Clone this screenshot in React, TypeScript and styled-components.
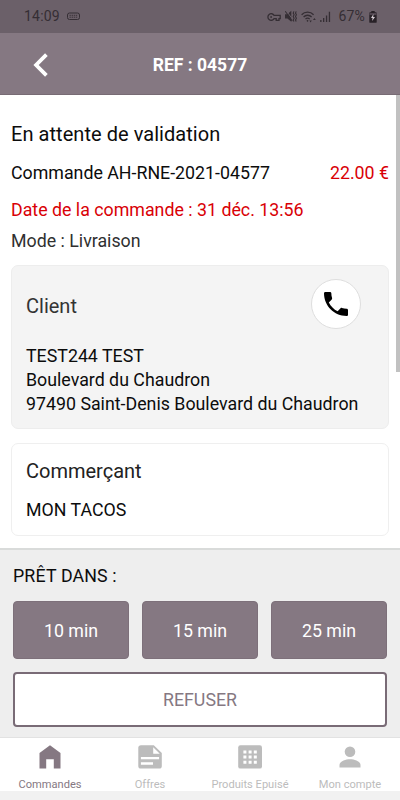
import React from 'react';
import styled, { createGlobalStyle } from 'styled-components';

const mauve = '#857882';

const GlobalStyle = createGlobalStyle`
  * { box-sizing: border-box; }
  body { margin: 0; background: #fff; font-family: Roboto, sans-serif; overflow: hidden; }
  button { font-family: inherit; padding: 0; cursor: pointer; }
  svg { display: block; flex: none; }
`;

const Screen = styled.div`
  width: 400px;
  height: 800px;
  display: flex;
  flex-direction: column;
  background: #f1f1f1;
  color: #0c0c0c;
`;

const StatusBar = styled.div`
  height: 33px;
  flex: none;
  display: flex;
  align-items: center;
  justify-content: space-between;
  padding: 0 23px 0 24px;
  background: #6b6069;
  color: #352e34;
`;

const StatusGroup = styled.div<{ $gap: number }>`
  display: flex;
  align-items: center;
  gap: ${(p) => p.$gap}px;
`;

const StatusText = styled.span<{ $inset?: number }>`
  margin-left: ${(p) => p.$inset ?? 0}px;
  font-size: 14px;
  line-height: 33px;
  letter-spacing: 0.2px;
`;

const Header = styled.header`
  height: 62px;
  flex: none;
  display: grid;
  grid-template-columns: 60px 1fr 60px;
  align-items: center;
  background: ${mauve};
  border-bottom: 1px solid #776b74;
`;

const BackButton = styled.button`
  display: flex;
  border: 0;
  background: none;
  padding: 2px 0 0 33px;
`;

const HeaderTitle = styled.h1`
  margin: 2px 0 0;
  text-align: center;
  color: #fff;
  font-size: 17.5px;
  font-weight: 700;
  line-height: 24px;
`;

const Body = styled.main`
  height: 453px;
  flex: none;
  display: flex;
  background: #fff;
`;

const Scroll = styled.div`
  width: 389px;
  padding: 25px 0 0 11px;
`;

const ScrollTrack = styled.div`
  width: 11px;
  padding-left: 7px;
`;

const ScrollThumb = styled.div`
  width: 4px;
  height: 277px;
  background: #c1c1c1;
`;

const Line = styled.div<{ $size: number; $height: number; $color?: string; $spacing?: number }>`
  display: flex;
  justify-content: space-between;
  white-space: nowrap;
  font-size: ${(p) => p.$size}px;
  line-height: ${(p) => p.$height}px;
  color: ${(p) => p.$color ?? 'inherit'};
  letter-spacing: ${(p) => p.$spacing ?? 0}px;
`;

const Price = styled.span`
  color: #d90006;
`;

const Card = styled.section<{ $filled?: boolean }>`
  width: 378px;
  height: ${(p) => (p.$filled ? 164 : 93)}px;
  margin-top: ${(p) => (p.$filled ? 7 : 14)}px;
  padding: ${(p) => (p.$filled ? 14 : 11)}px 14px 0;
  background: ${(p) => (p.$filled ? '#f4f4f4' : '#fff')};
  border: 1px solid ${(p) => (p.$filled ? '#ededed' : '#efefef')};
  border-radius: 7px;
`;

const CardHead = styled.div`
  height: 52px;
  margin-bottom: 12px;
  display: flex;
  align-items: center;
  justify-content: space-between;
  padding-right: 13px;
`;

const CallButton = styled.button`
  width: 50px;
  height: 50px;
  margin-bottom: 4px;
  display: flex;
  align-items: center;
  justify-content: center;
  border: 1px solid #dedede;
  border-radius: 50%;
  background: #fff;
`;

const Actions = styled.section`
  height: 189px;
  flex: none;
  padding: 14px 13px 0;
  background: #eeeeee;
  border-top: 2px solid #d9dbda;
`;

const Delays = styled.div`
  display: grid;
  grid-template-columns: repeat(3, 116px);
  column-gap: 13px;
  margin: 13px 0 13px;
`;

const DelayButton = styled.button`
  height: 58px;
  border: 1px solid #7d707a;
  border-radius: 4px;
  background: ${mauve};
  color: #fff;
  font-size: 17.8px;
`;

const RefuseButton = styled.button`
  width: 374px;
  height: 55px;
  border: 2px solid #796b76;
  border-radius: 4px;
  background: #fff;
  color: ${mauve};
  font-size: 17.8px;
`;

const Nav = styled.nav`
  height: 54px;
  flex: none;
  display: grid;
  grid-template-columns: repeat(4, 1fr);
  background: #fff;
  border-top: 1px solid #e2e2e2;
`;

const NavItem = styled.a<{ $active?: boolean }>`
  display: flex;
  flex-direction: column;
  align-items: center;
  padding-top: 6px;
  color: ${(p) => (p.$active ? mauve : '#bcbcbc')};
  font-size: 11.1px;
  line-height: 14px;
  white-space: nowrap;

  svg { margin-bottom: 8px; }
`;

const KeyboardIcon = () => (
  <svg width="13" height="9" viewBox="0 0 13 9" fill="none" stroke="currentColor">
    <rect x=".5" y="1" width="12" height="6.5" rx="2" />
    <path d="M2.5 3.3h8M2.5 5.2h8" strokeDasharray="1.4 .7" strokeWidth=".9" />
  </svg>
);

const KeyIcon = () => (
  <svg width="14" height="10" viewBox="0 0 14 10" fill="none" stroke="currentColor" strokeWidth="1.3">
    <path d="M7.1 3.4A3.3 3.3 0 1 0 7.1 6.6H9.2V8.3H12V6.6H13.2V3.4Z" />
    <circle cx="4.1" cy="5" r=".9" fill="currentColor" stroke="none" />
  </svg>
);

const MutedIcon = () => (
  <svg width="12" height="13" viewBox="0 0 12 13">
    <path d="M0 4.2h2.4L6.3.8v11L2.4 8.6H0z" fill="currentColor" />
    <path d="M1.2.6l6.4 8.8" stroke="#6b6069" strokeWidth="1" />
    <path d="M.2 1.2l7 9.8" stroke="currentColor" strokeWidth="1.1" />
    <path d="M8.9 1.4l-.7 1.7.9 1.7-.9 1.7.9 1.7-.9 1.7.7 1.6M11.2 1.4l-.7 1.7.9 1.7-.9 1.7.9 1.7-.9 1.7.7 1.6" fill="none" stroke="currentColor" strokeWidth="1.1" />
  </svg>
);

const WifiIcon = () => (
  <svg width="15" height="12" viewBox="0 0 15 12" fill="none" stroke="currentColor" strokeWidth="1.3">
    <path d="M.6 3.8a8.2 8.2 0 0 1 12 0M2.6 6a5.5 5.5 0 0 1 8 0M4.5 8.1a2.9 2.9 0 0 1 4.2 0" />
    <path d="M6.5 8.8l1 1-1 1.1-1-1.1z" fill="currentColor" stroke="none" />
    <path d="M8.4 9.5h2.4l-1.2 2zM12 9h2.8l-1.4-2z" fill="currentColor" stroke="none" />
  </svg>
);

const SignalIcon = () => (
  <svg width="11" height="11" viewBox="0 0 11 11" fill="currentColor">
    <path d="M.2 9h1.3v2H.2zM3 7h1.3v4H3zM5.9 4.4h1.3V11H5.9zM8.8.8h1.3V11H8.8z" />
  </svg>
);

const BatteryIcon = () => (
  <svg width="8" height="12" viewBox="0 0 8 12">
    <path d="M2.3 0h3.4v1.3h1.2c.5 0 .8.3.8.8v8.8c0 .6-.3.9-.8.9H1.1c-.5 0-.8-.3-.8-.9V2.1c0-.5.3-.8.8-.8h1.2z" fill="#282127" />
    <path d="M.4 2h7.2v2H.4z" fill="#514650" />
    <path d="M4.5 3L2 6.9h1.6l-.5 3L6 6H4.2z" fill="#d5ccd3" />
  </svg>
);

const BackIcon = () => (
  <svg width="16" height="24" viewBox="0 0 16 24" fill="none" stroke="#fff" strokeWidth="3.8">
    <path d="M13.4 1.7L3.1 12l10.3 10.3" />
  </svg>
);

const PhoneIcon = () => (
  <svg width="32" height="32" viewBox="0 0 24 24" fill="#000">
    <path d="M6.62 10.79c1.44 2.83 3.76 5.14 6.59 6.59l2.2-2.2c.27-.27.67-.36 1.02-.24 1.12.37 2.33.57 3.57.57.55 0 1 .45 1 1V20c0 .55-.45 1-1 1-9.39 0-17-7.61-17-17 0-.55.45-1 1-1h3.5c.55 0 1 .45 1 1 0 1.25.2 2.45.57 3.57.11.35.03.74-.25 1.02z" />
  </svg>
);

const HomeIcon = () => (
  <svg width="26" height="26" viewBox="0 0 26 26" fill="currentColor">
    <path d="M13 1.2L23.5 9v15.6h-6.7v-9.3H9.2v9.3H2.5V9z" />
  </svg>
);

const OffersIcon = () => (
  <svg width="26" height="26" viewBox="0 0 26 26">
    <path d="M4 1.2h12.8l8 7.9v13.1c0 1.4-1 2.4-2.4 2.4H3.7c-1.4 0-2.4-1-2.4-2.4V3.6c0-1.4 1-2.4 2.7-2.4z" fill="currentColor" />
    <path d="M16.2 3.2v6.6h6.6zM3.9 13.1h18.2v2.2H3.9zM3.9 18.3H16v2.4H3.9z" fill="#fff" />
  </svg>
);

const GridIcon = () => (
  <svg width="26" height="26" viewBox="0 0 26 26">
    <rect x="1.2" y="1.2" width="23.8" height="23.4" rx="2.2" fill="currentColor" />
    <path d="M6.4 6.4h3v3h-3zM11.6 6.4h3v3h-3zM16.8 6.4h3v3h-3zM6.4 11.6h3v3h-3zM11.6 11.6h3v3h-3zM16.8 11.6h3v3h-3zM6.4 16.8h3v3h-3zM11.6 16.8h3v3h-3zM16.8 16.8h3v3h-3z" fill="#fff" />
  </svg>
);

const AccountIcon = () => (
  <svg width="26" height="26" viewBox="0 0 26 26" fill="currentColor">
    <circle cx="13" cy="7.7" r="5.3" />
    <path d="M2.5 23.5v-2.4c0-3.9 5.7-5.9 10.5-5.9s10.5 2 10.5 5.9v2.4z" />
  </svg>
);

const delays = [10, 15, 25];

const tabs = [
  { label: 'Commandes', icon: <HomeIcon />, active: true },
  { label: 'Offres', icon: <OffersIcon /> },
  { label: 'Produits Epuisé', icon: <GridIcon /> },
  { label: 'Mon compte', icon: <AccountIcon /> },
];

export default function App() {
  return (
    <>
      <GlobalStyle />
      <Screen>
        <StatusBar>
          <StatusGroup $gap={7}>
            <StatusText>14:09</StatusText>
            <KeyboardIcon />
          </StatusGroup>
          <StatusGroup $gap={4}>
            <KeyIcon />
            <MutedIcon />
            <WifiIcon />
            <SignalIcon />
            <StatusText $inset={3}>67%</StatusText>
            <BatteryIcon />
          </StatusGroup>
        </StatusBar>
        <Header>
          <BackButton aria-label="Retour"><BackIcon /></BackButton>
          <HeaderTitle>REF : 04577</HeaderTitle>
        </Header>
        <Body>
          <Scroll>
            <Line $size={20} $height={28} $spacing={0.05}>En attente de validation</Line>
            <Line $size={17.8} $height={49}>
              <span>Commande AH-RNE-2021-04577</span>
              <Price>22.00 €</Price>
            </Line>
            <Line $size={17.8} $height={26} $color="#d90006">Date de la commande : 31 déc. 13:56</Line>
            <Line $size={17.8} $height={35} $color="#303030">Mode : Livraison</Line>
            <Card $filled>
              <CardHead>
                <Line $size={20} $height={28} $color="#333">Client</Line>
                <CallButton aria-label="Appeler"><PhoneIcon /></CallButton>
              </CardHead>
              <Line $size={17.8} $height={24}>TEST244 TEST</Line>
              <Line $size={17.8} $height={24}>Boulevard du Chaudron</Line>
              <Line $size={17.8} $height={24}>97490 Saint-Denis Boulevard du Chaudron</Line>
            </Card>
            <Card>
              <Line $size={20} $height={32} $color="#222">Commerçant</Line>
              <Line $size={17.8} $height={45}>MON TACOS</Line>
            </Card>
          </Scroll>
          <ScrollTrack><ScrollThumb /></ScrollTrack>
        </Body>
        <Actions>
          <Line $size={17.8} $height={24} $spacing={0.15}>PRÊT DANS :</Line>
          <Delays>
            {delays.map((d) => (
              <DelayButton key={d}>{d} min</DelayButton>
            ))}
          </Delays>
          <RefuseButton>REFUSER</RefuseButton>
        </Actions>
        <Nav>
          {tabs.map((t) => (
            <NavItem key={t.label} $active={t.active}>
              {t.icon}
              {t.label}
            </NavItem>
          ))}
        </Nav>
      </Screen>
    </>
  );
}
